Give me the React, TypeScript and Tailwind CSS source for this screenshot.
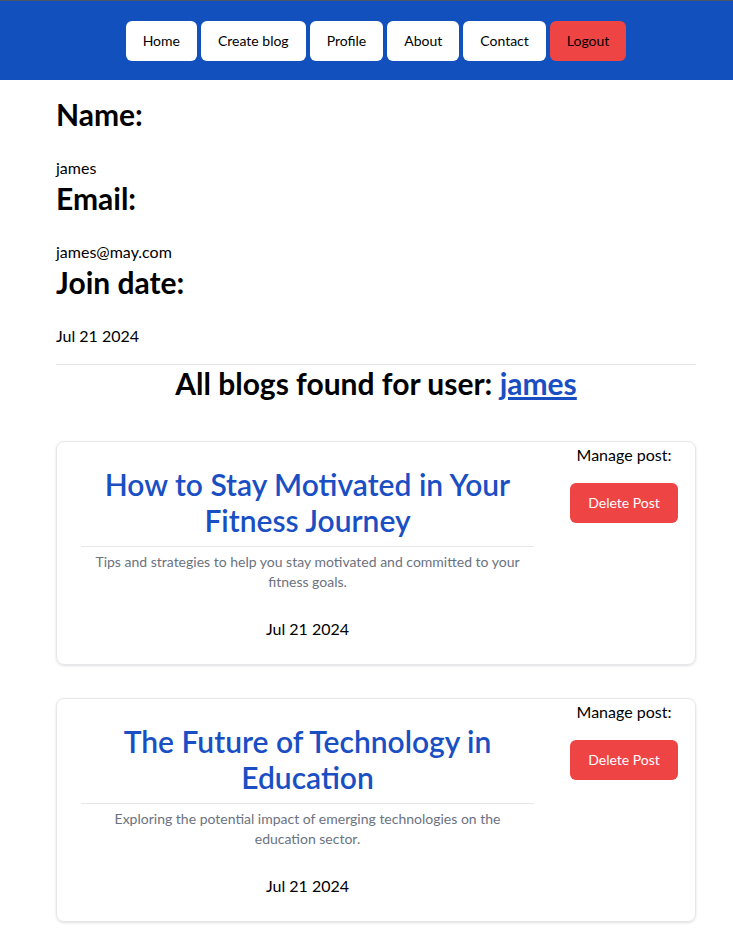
import React from "react";

const navItems = ["Home", "Create blog", "Profile", "About", "Contact"];

const blogs = [
  {
    title: "How to Stay Motivated in Your Fitness Journey",
    description:
      "Tips and strategies to help you stay motivated and committed to your fitness goals.",
    date: "Jul 21 2024",
  },
  {
    title: "The Future of Technology in Education",
    description:
      "Exploring the potential impact of emerging technologies on the education sector.",
    date: "Jul 21 2024",
  },
];

const BlogCard = ({ blog }: { blog: (typeof blogs)[number] }) => {
  return (
    <div className="flex border border-gray-200 rounded-lg shadow-sm mb-[33px]">
      <div className="ml-6 w-[453px] pt-[24px] pb-[23px] flex flex-col items-center text-center">
        <h2 className="text-3xl font-semibold text-[#1a4fc4] px-2">{blog.title}</h2>
        <hr className="w-full border-gray-200 mt-[8px]" />
        <p className="text-sm text-[#6b7280] mt-[5px] px-2">{blog.description}</p>
        <p className="mt-[25px] text-black">{blog.date}</p>
      </div>
      <div className="ml-auto w-[142px] flex flex-col items-center">
        <p className="mt-px text-black">Manage post:</p>
        <button className="mt-[16px] h-10 px-[18px] rounded-md bg-[#ef4444] text-white text-sm">
          Delete Post
        </button>
      </div>
    </div>
  );
};

const App = () => {
  return (
    <div className="min-h-screen bg-white font-['Lato',sans-serif] text-black">
      <nav className="border-t border-gray-600 bg-[#1150bd] h-20 pl-[19px] flex items-center justify-center gap-1">
        {navItems.map((item) => (
          <button key={item} className="h-10 px-[17px] rounded-md bg-white text-sm text-black">
            {item}
          </button>
        ))}
        <button className="h-10 px-[17px] rounded-md bg-[#ef4444] text-sm text-black">
          Logout
        </button>
      </nav>

      <div className="ml-14 w-[640px] pt-4">
        <h1 className="text-3xl font-bold mb-6">Name:</h1>
        <p>james</p>
        <h1 className="text-3xl font-bold mb-6">Email:</h1>
        <p>james@may.com</p>
        <h1 className="text-3xl font-bold mb-6">Join date:</h1>
        <p>Jul 21 2024</p>

        <hr className="border-gray-200 mt-4" />
        <h2 className="text-3xl font-bold text-center">
          All blogs found for user:{" "}
          <a href="#" className="text-[#1a4fc4] underline">
            james
          </a>
        </h2>

        <div className="mt-10">
          {blogs.map((blog) => (
            <BlogCard key={blog.title} blog={blog} />
          ))}
        </div>
      </div>
    </div>
  );
};

export default App;
